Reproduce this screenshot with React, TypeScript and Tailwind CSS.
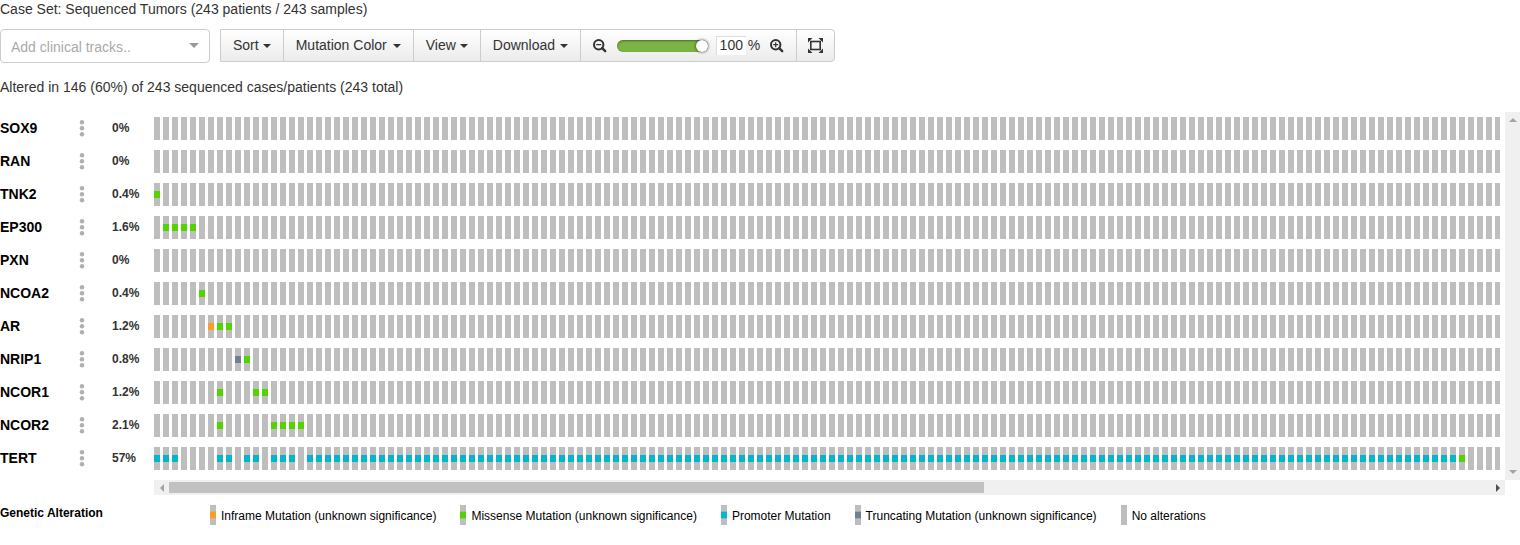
import { useState } from "react";
import type { ReactNode } from "react";

type Kind = "inframe" | "missense" | "promoter" | "truncating";

const COLORS: Record<Kind, string> = {
  inframe: "#ff9b27",
  missense: "#53d400",
  promoter: "#00b7ce",
  truncating: "#708090",
};

const SAMPLES = 243;
const STEP = 9;

const range = (from: number, to: number) =>
  Array.from({ length: to - from + 1 }, (_, i) => from + i);

type Track = { gene: string; percent: string; marks: Partial<Record<Kind, number[]>> };

const TRACKS: Track[] = [
  { gene: "SOX9", percent: "0%", marks: {} },
  { gene: "RAN", percent: "0%", marks: {} },
  { gene: "TNK2", percent: "0.4%", marks: { missense: [0] } },
  { gene: "EP300", percent: "1.6%", marks: { missense: range(1, 4) } },
  { gene: "PXN", percent: "0%", marks: {} },
  { gene: "NCOA2", percent: "0.4%", marks: { missense: [5] } },
  { gene: "AR", percent: "1.2%", marks: { inframe: [6], missense: [7, 8] } },
  { gene: "NRIP1", percent: "0.8%", marks: { truncating: [9], missense: [10] } },
  { gene: "NCOR1", percent: "1.2%", marks: { missense: [7, 11, 12] } },
  { gene: "NCOR2", percent: "2.1%", marks: { missense: [7, ...range(13, 16)] } },
  {
    gene: "TERT",
    percent: "57%",
    marks: { promoter: [0, 1, 2, 7, 8, 10, 11, 13, 14, 15, ...range(17, 144)], missense: [145] },
  },
];

const LEGEND: { label: string; kind?: Kind }[] = [
  { label: "Inframe Mutation (unknown significance)", kind: "inframe" },
  { label: "Missense Mutation (unknown significance)", kind: "missense" },
  { label: "Promoter Mutation", kind: "promoter" },
  { label: "Truncating Mutation (unknown significance)", kind: "truncating" },
  { label: "No alterations" },
];

function TrackCells({ marks }: { marks: Track["marks"] }) {
  return (
    <svg width={SAMPLES * STEP} height="23" shapeRendering="crispEdges" className="block max-w-none" aria-hidden="true">
      {range(0, SAMPLES - 1).map((i) => (
        <rect key={i} x={i * STEP} y="0" width="6" height="23" fill="#bebebe" />
      ))}
      {(Object.keys(marks) as Kind[]).map((kind) =>
        marks[kind]!.map((i) => (
          <rect key={kind + i} x={i * STEP} y="8" width="6" height="7" fill={COLORS[kind]} />
        )),
      )}
    </svg>
  );
}

function MenuButton({ children, width = "" }: { children: ReactNode; width?: string }) {
  return (
    <button
      type="button"
      className={`flex items-center justify-between gap-1 border-r border-[#ccc] px-3 pb-0.5 ${width}`}
    >
      {children}
      <svg width="8" height="4" viewBox="0 0 8 4" className="mt-0.5" aria-hidden="true">
        <path d="M0 0h8L4 4z" fill="#333" />
      </svg>
    </button>
  );
}

function Magnifier({ plus = false }: { plus?: boolean }) {
  return (
    <svg width="14" height="14" viewBox="0 0 14 14" fill="none" stroke="#333" aria-hidden="true">
      <circle cx="5.7" cy="5.7" r="4.7" strokeWidth="2" />
      <path d="M9.2 9.2l3 3" strokeWidth="2.4" strokeLinecap="round" />
      <path d={plus ? "M3.2 5.7h5M5.7 3.2v5" : "M3.2 5.7h5"} strokeWidth="1.2" />
    </svg>
  );
}

function Arrow({ d, fill }: { d: string; fill: string }) {
  return (
    <svg width="8" height="8" viewBox="0 0 8 8" aria-hidden="true">
      <path d={d} fill={fill} />
    </svg>
  );
}

function Toolbar() {
  const [zoom, setZoom] = useState(100);
  return (
    <div className="mt-2 flex items-start gap-2.5">
      <div className="relative w-[210px]">
        <select
          aria-label="Add clinical tracks"
          className="block h-[34px] w-full appearance-none rounded border border-[#ccc] bg-white px-2.5 pt-0.5 text-[#aaa]"
        >
          <option>Add clinical tracks..</option>
        </select>
        <svg className="pointer-events-none absolute top-3.5 right-2.5" width="11" height="5" viewBox="0 0 11 5" aria-hidden="true">
          <path d="M0 0h10L5 5z" fill="#999" />
        </svg>
      </div>
      <div className="flex h-[33px] overflow-hidden rounded-r border border-[#ccc] bg-linear-to-b from-white to-[#ebebeb]">
        <MenuButton>Sort</MenuButton>
        <MenuButton width="min-w-[130px]">Mutation Color</MenuButton>
        <MenuButton>View</MenuButton>
        <MenuButton width="min-w-[100px]">Download</MenuButton>
        <div className="flex items-center border-r border-[#ccc] px-3">
          <button type="button" aria-label="Zoom out">
            <Magnifier />
          </button>
          <input
            type="range"
            aria-label="Zoom"
            min="1"
            max="100"
            value={zoom}
            onChange={(e) => setZoom(Number(e.target.value))}
            className="mr-2 ml-2.5 h-3 w-[91px] appearance-none rounded-full bg-[#7cb342] shadow-[inset_0_1px_2px_rgba(0,0,0,0.4)] [&::-webkit-slider-thumb]:size-3 [&::-webkit-slider-thumb]:appearance-none [&::-webkit-slider-thumb]:rounded-full [&::-webkit-slider-thumb]:bg-white [&::-webkit-slider-thumb]:shadow-[0_0_3px_rgba(0,0,0,0.8)]"
          />
          <input
            type="text"
            aria-label="Zoom percent"
            value={zoom}
            onChange={(e) => setZoom(Number(e.target.value) || 1)}
            className="h-[19px] w-[30px] border-t border-l border-[#ddd] bg-white pb-0.5 text-center"
          />
          <span className="mr-2.5 ml-0.5 pb-0.5">%</span>
          <button type="button" aria-label="Zoom in">
            <Magnifier plus />
          </button>
        </div>
        <button type="button" aria-label="Fit to screen" className="px-[11px]">
          <svg width="15" height="15" viewBox="0 0 15 15" aria-hidden="true">
            <rect x="2.8" y="3.5" width="9.4" height="8" fill="none" stroke="#333" strokeWidth="1.6" />
            <path d="M0 0h4.5L0 4.5zM15 0v4.5L10.500 0zM15 15h-4.5l4.500-4.500zM0 15v-4.500l4.500 4.500z" fill="#333" />
          </svg>
        </button>
      </div>
    </div>
  );
}

export default function App() {
  return (
    <main className="bg-white font-['Liberation_Sans',Arial,sans-serif] text-sm text-[#333]">
      <p className="h-[21px] leading-[18px]">Case Set: Sequenced Tumors (243 patients / 243 samples)</p>
      <Toolbar />
      <p className="mt-3.5 leading-5">Altered in 146 (60%) of 243 sequenced cases/patients (243 total)</p>

      <div className="mt-[15px] flex">
        <div className="min-w-0 flex-1">
          <table className="mr-[5px] mb-[5px] w-[calc(100%-5px)] table-fixed border-collapse">
            <colgroup>
              <col className="w-[79px]" />
              <col className="w-[33px]" />
              <col className="w-[42px]" />
              <col />
            </colgroup>
            <tbody>
              {TRACKS.map((t) => (
                <tr key={t.gene} className="h-[33px]">
                  <th scope="row" className="p-0 pb-0.5 text-left font-bold text-black">
                    {t.gene}
                  </th>
                  <td className="p-0">
                    <button type="button" aria-label={`${t.gene} options`} className="block">
                      <svg width="6" height="17" viewBox="0 0 6 17" fill="#afafaf" aria-hidden="true">
                        <circle cx="3" cy="2.2" r="2.2" />
                        <circle cx="3" cy="8.2" r="2.2" />
                        <circle cx="3" cy="14.2" r="2.2" />
                      </svg>
                    </button>
                  </td>
                  <td className="p-0 pb-0.5 text-xs font-bold">{t.percent}</td>
                  <td className="p-0">
                    <div className="overflow-hidden">
                      <TrackCells marks={t.marks} />
                    </div>
                  </td>
                </tr>
              ))}
            </tbody>
          </table>
          <div className="ml-[154px] flex h-[15px] items-center justify-between bg-[#f0f0f0]">
            <div className="flex flex-1 items-center">
              <div className="flex w-[15px] justify-center">
                <Arrow d="M6 0v8L2 4z" fill="#a3a3a3" />
              </div>
              <div className="h-[11px] w-[61%] bg-[#c1c1c1]" />
            </div>
            <div className="flex w-[15px] justify-center">
              <Arrow d="M2 0v8l4-4z" fill="#505050" />
            </div>
          </div>
        </div>
        <div className="mb-[15px] flex w-[15px] flex-col items-center justify-between bg-[#f0f0f0] py-1">
          <Arrow d="M0 6h8L4 2z" fill="#a3a3a3" />
          <Arrow d="M0 2h8L4 6z" fill="#a3a3a3" />
        </div>
      </div>

      <div className="mt-2.5 flex text-xs leading-4 text-black">
        <h2 className="w-[210px] font-bold">Genetic Alteration</h2>
        <ul className="flex flex-wrap gap-x-6">
          {LEGEND.map(({ label, kind }) => (
            <li key={label} className="flex gap-[5px]">
              <svg width="6" height="20" viewBox="0 0 6 20" aria-hidden="true">
                <rect width="6" height="20" fill="#bebebe" />
                {kind && <rect y="6.67" width="6" height="6.67" fill={COLORS[kind]} />}
              </svg>
              <span className="pt-[3px]">{label}</span>
            </li>
          ))}
        </ul>
      </div>
    </main>
  );
}
